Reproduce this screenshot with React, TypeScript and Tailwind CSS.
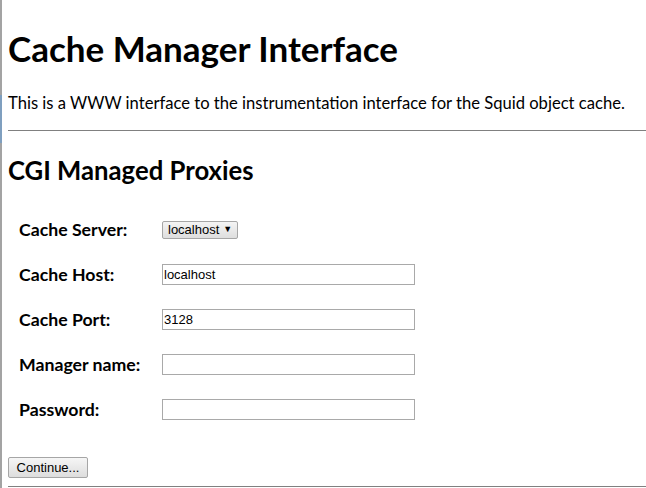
import React from "react";

const rows = [
  { label: "Cache Server:", kind: "select" },
  { label: "Cache Host:", kind: "input", value: "localhost" },
  { label: "Cache Port:", kind: "input", value: "3128" },
  { label: "Manager name:", kind: "input", value: "" },
  { label: "Password:", kind: "input", value: "" },
];

export default function App() {
  return (
    <div className="relative min-h-[488px] w-full overflow-hidden bg-white pl-2 font-['Lato',sans-serif] text-black">
      <div className="absolute left-0 top-0 h-full w-[2px] bg-[#a3a3a3]" />
      <div className="absolute left-0 top-[95px] h-[48px] w-[2px] bg-[#7f9fbf]" />
      <h1 className="pt-[27px] text-[35px] font-bold leading-[43px]">Cache Manager Interface</h1>
      <p className="mt-[21px] whitespace-nowrap text-[16.6px] leading-[24px]">
        This is a WWW interface to the instrumentation interface for the Squid object cache.
      </p>
      <div className="mt-[15px] h-px bg-[#808080]" />
      <h2 className="mt-[23px] text-[25.7px] font-bold leading-[32px]">CGI Managed Proxies</h2>
      <div className="mt-[21px] flex flex-col">
        {rows.map((r) => (
          <div key={r.label} className="flex h-[45px] items-center">
            <div className="w-[154px] pl-[11px] pt-[2px] text-[17.7px] font-bold">{r.label}</div>
            {r.kind === "select" ? (
              <div className="flex h-[18px] items-center gap-[4px] rounded-[2px] border border-[#a6a6a6] bg-gradient-to-b from-[#f4f4f4] to-[#dedede] pl-[5px] pr-[5px] font-['Liberation_Sans',sans-serif] text-[13px] leading-none">
                <span>localhost</span>
                <span className="text-[9px]">▼</span>
              </div>
            ) : (
              <div className="flex h-[21px] w-[253px] items-center border border-[#a9a9a9] bg-white pl-[1px] font-['Liberation_Sans',sans-serif] text-[13px]">
                {r.value}
              </div>
            )}
          </div>
        ))}
      </div>
      <div className="mt-[25px] flex h-[21px] w-[80px] items-center justify-center rounded-[2px] border border-[#a6a6a6] bg-gradient-to-b from-[#f6f6f6] to-[#dddddd] font-['Liberation_Sans',sans-serif] text-[13px]">
        Continue...
      </div>
      <div className="mt-[8px] h-px bg-[#808080]" />
    </div>
  );
}
